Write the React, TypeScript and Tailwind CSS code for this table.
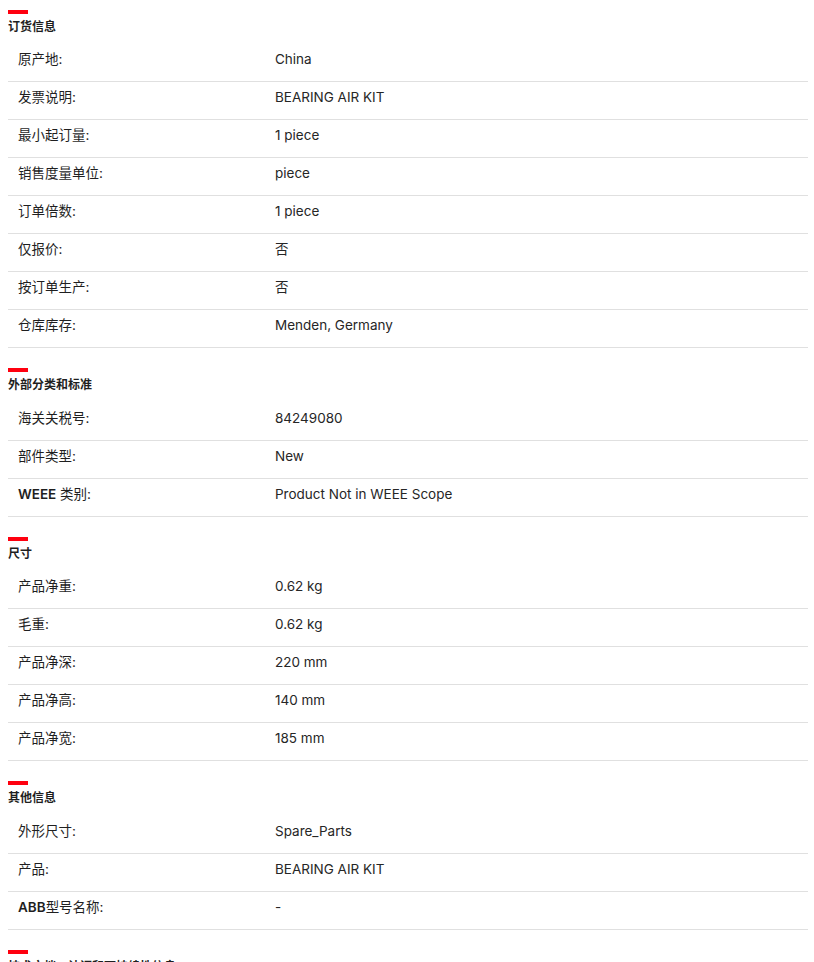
import React from 'react';

type Row = { label: string; value: string };
type Section = { title: string; rows: Row[] };

const SECTIONS: Section[] = [
  {
    title: '订货信息',
    rows: [
      { label: '原产地:', value: 'China' },
      { label: '发票说明:', value: 'BEARING AIR KIT' },
      { label: '最小起订量:', value: '1 piece' },
      { label: '销售度量单位:', value: 'piece' },
      { label: '订单倍数:', value: '1 piece' },
      { label: '仅报价:', value: '否' },
      { label: '按订单生产:', value: '否' },
      { label: '仓库库存:', value: 'Menden, Germany' },
    ],
  },
  {
    title: '外部分类和标准',
    rows: [
      { label: '海关关税号:', value: '84249080' },
      { label: '部件类型:', value: 'New' },
      { label: 'WEEE 类别:', value: 'Product Not in WEEE Scope' },
    ],
  },
  {
    title: '尺寸',
    rows: [
      { label: '产品净重:', value: '0.62 kg' },
      { label: '毛重:', value: '0.62 kg' },
      { label: '产品净深:', value: '220 mm' },
      { label: '产品净高:', value: '140 mm' },
      { label: '产品净宽:', value: '185 mm' },
    ],
  },
  {
    title: '其他信息',
    rows: [
      { label: '外形尺寸:', value: 'Spare_Parts' },
      { label: '产品:', value: 'BEARING AIR KIT' },
      { label: 'ABB型号名称:', value: '-' },
    ],
  },
  {
    title: '技术文档、认证和可持续性信息',
    rows: [{ label: '文档:', value: '-' }],
  },
];

// latin words in labels render heavier than the CJK part
const Label: React.FC<{ text: string }> = ({ text }) => (
  <>
    {text.split(/([A-Za-z]+)/).map((part, i) =>
      /^[A-Za-z]+$/.test(part) ? (
        <span key={i} className="font-semibold">
          {part}
        </span>
      ) : (
        <span key={i}>{part}</span>
      )
    )}
  </>
);

const SpecSection: React.FC<{ section: Section; first: boolean }> = ({ section, first }) => (
  <section className={first ? '' : 'mt-5'}>
    <div className="h-1 w-5 bg-[#ff000f]" />
    <h3 className="mt-1 text-[12px] leading-[18px] font-bold text-[#1f1f1f]">{section.title}</h3>
    <div className={first ? 'mt-2' : 'mt-[8.5px]'}>
      {section.rows.map((row) => (
        <div
          key={row.label}
          className="flex border-b border-[#e0e0e0] pt-[5px] pb-[12px] text-[13.5px] leading-[20px]"
        >
          <div className="w-[257px] shrink-0 pl-[10px] text-[#1f1f1f]">
            <Label text={row.label} />
          </div>
          <div className="flex-1 pl-[10px] text-[#262626]">{row.value}</div>
        </div>
      ))}
    </div>
  </section>
);

export default function App() {
  return (
    <div
      className="min-h-screen bg-white pl-2 pr-[6px] pt-[10px]"
      style={{ fontFamily: 'Inter, "Noto Sans CJK SC", sans-serif' }}
    >
      {SECTIONS.map((s, i) => (
        <SpecSection key={s.title} section={s} first={i === 0} />
      ))}
    </div>
  );
}
